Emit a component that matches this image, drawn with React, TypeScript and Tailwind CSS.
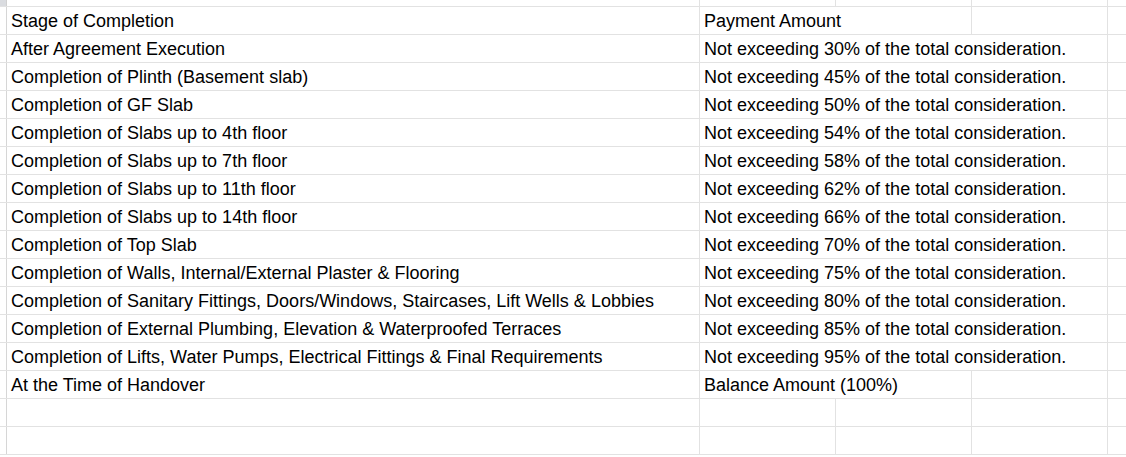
import React from "react";

const rows: [string, string, number][] = [
  ["Stage of Completion", "Payment Amount", 2],
  ["After Agreement Execution", "Not exceeding 30% of the total consideration.", 3],
  ["Completion of Plinth (Basement slab)", "Not exceeding 45% of the total consideration.", 3],
  ["Completion of GF Slab", "Not exceeding 50% of the total consideration.", 3],
  ["Completion of Slabs up to 4th floor", "Not exceeding 54% of the total consideration.", 3],
  ["Completion of Slabs up to 7th floor", "Not exceeding 58% of the total consideration.", 3],
  ["Completion of Slabs up to 11th floor", "Not exceeding 62% of the total consideration.", 3],
  ["Completion of Slabs up to 14th floor", "Not exceeding 66% of the total consideration.", 3],
  ["Completion of Top Slab", "Not exceeding 70% of the total consideration.", 3],
  ["Completion of Walls, Internal/External Plaster & Flooring", "Not exceeding 75% of the total consideration.", 3],
  ["Completion of Sanitary Fittings, Doors/Windows, Staircases, Lift Wells & Lobbies", "Not exceeding 80% of the total consideration.", 3],
  ["Completion of External Plumbing, Elevation & Waterproofed Terraces", "Not exceeding 85% of the total consideration.", 3],
  ["Completion of Lifts, Water Pumps, Electrical Fittings & Final Requirements", "Not exceeding 95% of the total consideration.", 3],
  ["At the Time of Handover", "Balance Amount (100%)", 2],
  ["", "", 1],
  ["", "", 1],
];

function Row({ a, b, span }: { a: string; b: string; span: number }) {
  const cell = "border-r border-[#e2e2e2] overflow-visible whitespace-nowrap pl-[4px] leading-[28px] shrink-0";
  const cols: React.ReactNode[] = [];
  if (span === 3) {
    cols.push(<div key="c" className={`${cell} w-[408px]`}>{b}</div>);
  } else if (span === 2) {
    cols.push(<div key="c" className={`${cell} w-[272px]`}>{b}</div>);
    cols.push(<div key="e" className={`${cell} w-[136px]`}></div>);
  } else {
    cols.push(<div key="c" className={`${cell} w-[136px]`}>{b}</div>);
    cols.push(<div key="d" className={`${cell} w-[136px]`}></div>);
    cols.push(<div key="e" className={`${cell} w-[136px]`}></div>);
  }
  return (
    <div className="flex h-[28px] border-b border-[#e2e2e2] overflow-hidden">
      <div className="w-[7px] shrink-0 border-r border-[#d6d6d6] bg-white"></div>
      <div className={`${cell} w-[693px]`}>{a}</div>
      {cols}
      <div className="flex-1"></div>
    </div>
  );
}

export default function App() {
  return (
    <div
      className="w-[1126px] h-[457px] overflow-hidden bg-white text-[18px] text-[#000000]"
      style={{ fontFamily: '"Liberation Sans", Arial, sans-serif' }}
    >
      <div className="flex h-[7px] border-b border-[#e2e2e2]">
        <div className="w-[7px] shrink-0 border-r border-[#d0d0d0] bg-[#dadce0]"></div>
        <div className="w-[693px] shrink-0 border-r border-[#e2e2e2]"></div>
        <div className="w-[136px] shrink-0 border-r border-[#e2e2e2]"></div>
        <div className="w-[136px] shrink-0 border-r border-[#e2e2e2]"></div>
        <div className="w-[136px] shrink-0 border-r border-[#e2e2e2]"></div>
      </div>
      {rows.map(([a, b, s], i) => (
        <Row key={i} a={a} b={b} span={s} />
      ))}
    </div>
  );
}
